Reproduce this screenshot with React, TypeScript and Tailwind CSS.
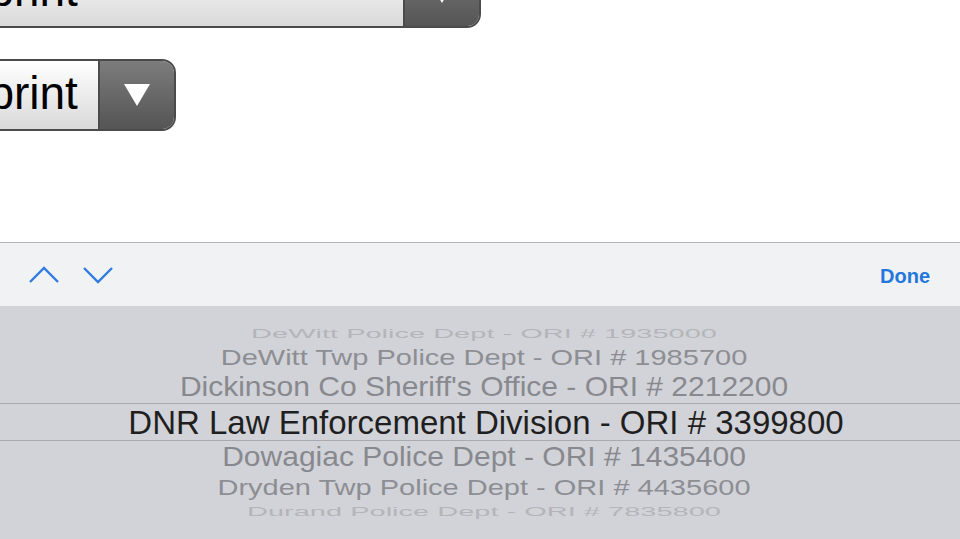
type Row = {
  label: string;
  h: string;
  size: string;
  sy: string;
  color: string;
};

const rowsAbove: Row[] = [
  { label: "DeWitt Police Dept - ORI # 1935000", h: "h-[22px]", size: "text-[29px]", sy: "scale-y-[0.45]", color: "text-[#b4b5ba]" },
  { label: "DeWitt Twp Police Dept - ORI # 1985700", h: "h-[27px]", size: "text-[29px]", sy: "scale-y-[0.78]", color: "text-[#8d8e93]" },
  { label: "Dickinson Co Sheriff's Office - ORI # 2212200", h: "h-[32px]", size: "text-[30px]", sy: "scale-y-[0.93]", color: "text-[#88898e]" },
];

const rowsBelow: Row[] = [
  { label: "Dowagiac Police Dept - ORI # 1435400", h: "h-[31px]", size: "text-[30px]", sy: "scale-y-[0.93]", color: "text-[#88898e]" },
  { label: "Dryden Twp Police Dept - ORI # 4435600", h: "h-[30px]", size: "text-[29px]", sy: "scale-y-[0.78]", color: "text-[#8d8e93]" },
  { label: "Durand Police Dept - ORI # 7835800", h: "h-[18px]", size: "text-[29px]", sy: "scale-y-[0.45]", color: "text-[#b4b5ba]" },
];

function PickerRow({ row }: { row: Row }) {
  return (
    <div className={`flex ${row.h} w-full items-center justify-center pl-[8px]`}>
      <span className={`${row.size} ${row.sy} ${row.color} whitespace-nowrap leading-none`}>{row.label}</span>
    </div>
  );
}

// scrolled-off form select, only its right end is on screen
function Select({ width }: { width: string }) {
  return (
    <div className={`-ml-[152px] flex h-[72px] ${width} overflow-hidden rounded-r-[14px] border-2 border-[#4b4b4b]`}>
      <div className="flex flex-1 items-center bg-gradient-to-b from-white to-[#d9d9d9] pl-[8px] pb-[4px] text-[46px] leading-none text-black">
        Fingerprint
      </div>
      <div className="flex w-[76px] items-center justify-center border-l-2 border-[#4b4b4b] bg-gradient-to-b from-[#7c7c7c] to-[#555555]">
        <svg width="30" height="26" viewBox="0 0 30 26">
          <polygon points="2,2 28,2 15,24" fill="white" />
        </svg>
      </div>
    </div>
  );
}

export default function App() {
  return (
    <div className="flex h-[539px] w-[960px] flex-col overflow-hidden bg-white font-['Liberation_Sans',Arial,sans-serif]">
      <div className="h-[242px] overflow-hidden">
        <div className="-mt-[44px] flex flex-col gap-[31px]">
          <Select width="w-[633px]" />
          <Select width="w-[328px]" />
        </div>
      </div>

      <div className="flex h-[64px] items-center justify-between border-t border-[#b5b6ba] bg-[#f1f2f4] pl-[28px] pr-[30px]">
        <div className="flex items-center gap-[22px]">
          <svg width="32" height="20" viewBox="0 0 32 20">
            <polyline points="2,17 16,3 30,17" fill="none" stroke="#2f7be0" strokeWidth="2.4" />
          </svg>
          <svg width="32" height="20" viewBox="0 0 32 20">
            <polyline points="2,3 16,17 30,3" fill="none" stroke="#2f7be0" strokeWidth="2.4" />
          </svg>
        </div>
        <span className="pt-[2px] text-[20px] font-bold text-[#2478dc]">Done</span>
      </div>

      <div className="flex flex-1 flex-col bg-[#d2d3d8] pt-[16px]">
        {rowsAbove.map((r) => (
          <PickerRow key={r.label} row={r} />
        ))}
        <div className="flex h-[38px] items-center justify-center border-y border-[#a9aaaf] pl-[12px]">
          <span className="whitespace-nowrap text-[33px] leading-none text-[#1f1f22]">
            DNR Law Enforcement Division - ORI # 3399800
          </span>
        </div>
        {rowsBelow.map((r) => (
          <PickerRow key={r.label} row={r} />
        ))}
      </div>
    </div>
  );
}
